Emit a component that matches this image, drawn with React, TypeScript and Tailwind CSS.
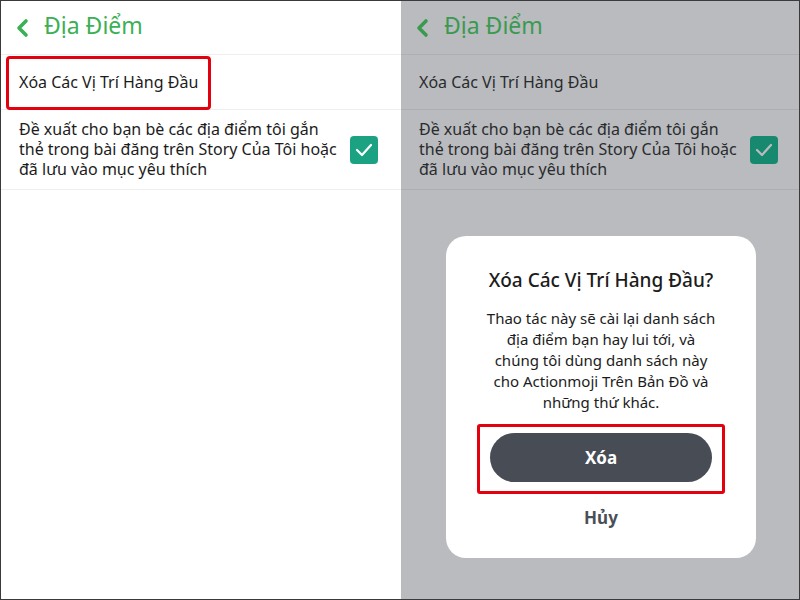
import React from "react";

function Chevron({ color }: { color: string }) {
  return (
    <svg width="14" height="20" viewBox="0 0 14 20" className="shrink-0">
      <path d="M11 3 L4 10 L11 17" fill="none" stroke={color} strokeWidth="3.6" strokeLinecap="round" strokeLinejoin="round" />
    </svg>
  );
}

function Settings({ dim }: { dim: boolean }) {
  const green = dim ? "#3a9a4f" : "#3bb054";
  const line = dim ? "border-[#adafb3]" : "border-[#eeeeee]";
  const text = dim ? "text-[#2a2b2d]" : "text-[#1c1c1c]";
  return (
    <div className={"flex flex-col w-[400px] h-full " + (dim ? "bg-[#b9bbbf]" : "bg-white")}>
      <div className={"h-[54px] flex items-center pl-[14px] gap-[15px] border-b " + line}>
        <Chevron color={green} />
        <span className="text-[23px] leading-none pb-[4px]" style={{ color: green }}>Địa Điểm</span>
      </div>
      <div className={"h-[55px] flex items-center pl-[18px] border-b text-[16px] " + line + " " + text}>
        Xóa Các Vị Trí Hàng Đầu
      </div>
      <div className={"h-[80px] flex items-center pl-[18px] pr-[23px] border-b " + line}>
        <div className={"flex-1 text-[16px] leading-[20px] pb-[2px] " + text}>
          Đề xuất cho bạn bè các địa điểm tôi gắn
          <br />
          thẻ trong bài đăng trên Story Của Tôi hoặc
          <br />
          đã lưu vào mục yêu thích
        </div>
        <div className={"w-[28px] h-[28px] rounded-[4px] flex items-center justify-center " + (dim ? "bg-[#17896f]" : "bg-[#1ba283]")}>
          <svg width="20" height="16" viewBox="0 0 20 16">
            <path d="M3 8 L8 13 L17 3" fill="none" stroke={dim ? "#b9bbbf" : "white"} strokeWidth="2.2" strokeLinecap="round" strokeLinejoin="round" />
          </svg>
        </div>
      </div>
    </div>
  );
}

export default function App() {
  return (
    <div
      className="w-[800px] h-[600px] border border-[#3a3a3a] flex relative overflow-hidden box-border"
      style={{ fontFamily: '"Noto Sans", "Open Sans", sans-serif' }}
    >
      <div className="relative">
        <Settings dim={false} />
        <div className="absolute left-[5px] top-[55px] w-[205px] h-[54px] border-[3px] border-[#e3000f] rounded-[4px]" />
      </div>
      <div className="relative">
        <Settings dim={true} />
        <div className="absolute left-[45px] top-[235px] w-[310px] h-[322px] bg-white rounded-[20px] flex flex-col items-center">
          <div className="mt-[32px] text-[19px] font-medium text-[#1c1c1c] leading-[24px]">Xóa Các Vị Trí Hàng Đầu?</div>
          <div className="mt-[16px] text-[15px] leading-[21px] text-[#1c1c1c] text-center">
            Thao tác này sẽ cài lại danh sách
            <br />
            địa điểm bạn hay lui tới, và
            <br />
            chúng tôi dùng danh sách này
            <br />
            cho Actionmoji Trên Bản Đồ và
            <br />
            những thứ khác.
          </div>
          <div className="relative mt-[20px] w-[222px] h-[49px] rounded-full bg-[#474c55] flex items-center justify-center text-white font-bold text-[17px]">
            Xóa
            <div className="absolute -left-[13px] -top-[9px] w-[248px] h-[70px] border-[3px] border-[#e3000f] rounded-[3px]" />
          </div>
          <div className="mt-[23px] text-[17px] font-bold text-[#4a4f57]">Hủy</div>
        </div>
      </div>
    </div>
  );
}
